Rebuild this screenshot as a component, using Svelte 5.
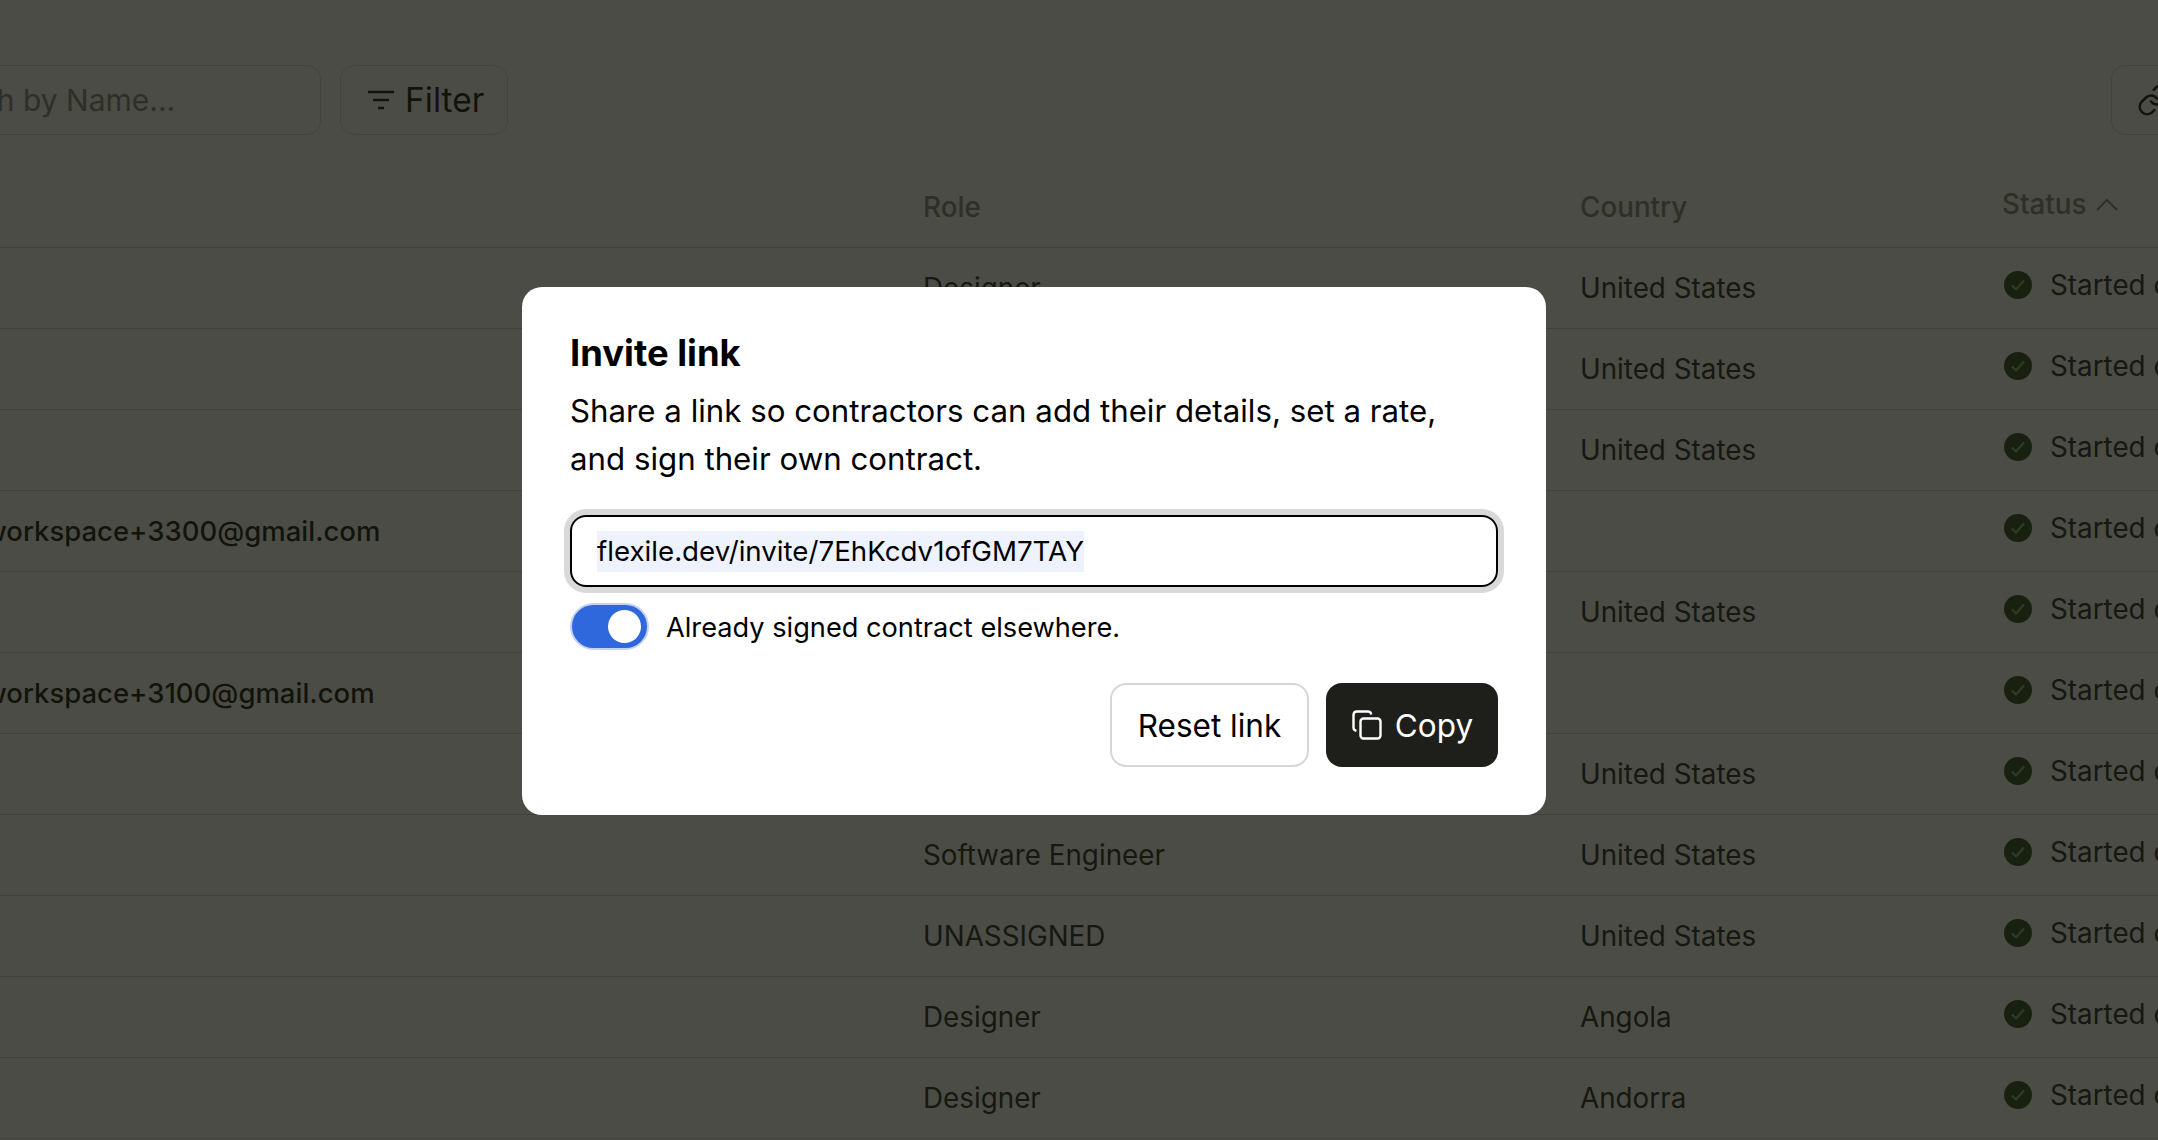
<script>
  const rows = [
    { name: '', role: 'Designer', country: 'United States' },
    { name: '', role: 'Software Engineer', country: 'United States' },
    { name: '', role: 'Designer', country: 'United States' },
    { name: 'workspace+3300@gmail.com', role: '', country: '' },
    { name: '', role: 'Designer', country: 'United States' },
    { name: 'workspace+3100@gmail.com', role: '', country: '' },
    { name: '', role: 'Designer', country: 'United States' },
    { name: '', role: 'Software Engineer', country: 'United States' },
    { name: '', role: 'UNASSIGNED', country: 'United States' },
    { name: '', role: 'Designer', country: 'Angola' },
    { name: '', role: 'Designer', country: 'Andorra' }
  ];
</script>

<main class="page">
  <div class="toolbar">
    <div class="search">Search by Name...</div>
    <button type="button" class="filter">
      <svg width="30" height="24" viewBox="0 0 30 24" fill="none" stroke="currentColor" stroke-width="2.6">
        <path d="M2 4h26M7 12h16M12 20h6" />
      </svg>
      Filter
    </button>
    <button type="button" class="link-btn" aria-label="Invite link">
      <svg width="36" height="36" viewBox="0 0 24 24" fill="none" stroke="currentColor" stroke-width="1.7" stroke-linecap="round">
        <path d="M10 13a5 5 0 0 0 7.5.5l3-3a5 5 0 0 0-7-7l-1.7 1.7" />
        <path d="M14 11a5 5 0 0 0-7.500-.5l-3 3a5 5 0 0 0 7 7l1.700-1.700" />
      </svg>
    </button>
  </div>

  <div class="table">
    <div class="row head">
      <div class="name"></div>
      <div class="role">Role</div>
      <div class="country">Country</div>
      <div class="status">Status
        <svg width="24" height="16" viewBox="0 0 24 16" fill="none" stroke="currentColor" stroke-width="2"><path d="M2 14 12 4l10 10" /></svg>
      </div>
    </div>
    {#each rows as row}
      <div class="row">
        <div class="name">{row.name}</div>
        <div class="role">{row.role}</div>
        <div class="country">{row.country}</div>
        <div class="status">
          <svg class="check" width="28" height="28" viewBox="0 0 28 28">
            <circle cx="14" cy="14" r="14" fill="#37552f" />
            <path d="M8 14.500l4 4 8-9" fill="none" stroke="#9db294" stroke-width="2.200" />
          </svg>
          <span>Started contract</span>
        </div>
      </div>
    {/each}
  </div>
</main>

<div class="overlay">
  <div class="dialog" role="dialog" aria-labelledby="invite-title">
    <h2 id="invite-title">Invite link</h2>
    <p>Share a link so contractors can add their details, set a rate,<br />and sign their own contract.</p>
    <div class="field"><span class="selected">flexile.dev/invite/7EhKcdv1ofGM7TAY</span></div>
    <div class="switch-row">
      <span class="switch"><span class="knob"></span></span>
      <span class="switch-label">Already signed contract elsewhere.</span>
    </div>
    <div class="actions">
      <button type="button" class="reset">Reset link</button>
      <button type="button" class="copy">
        <svg width="32" height="32" viewBox="0 0 32 32" fill="none" stroke="currentColor" stroke-width="2.400" stroke-linejoin="round" stroke-linecap="round">
          <rect x="9.500" y="9.500" width="20" height="20" rx="3" />
          <path d="M4.500 21.500C3 21 2.500 20 2.500 18.500V6c0-2 1.500-3.500 3.500-3.500h11c1.500 0 2.500.5 3 2" />
        </svg>
        Copy
      </button>
    </div>
  </div>
</div>

<style>
  :global(body) {
    margin: 0;
    overflow: hidden;
    background: #fff;
    font-family: Inter, "Liberation Sans", sans-serif;
  }

  .page {
    width: 2500px;
    height: 1140px;
    margin-left: -120px;
    overflow: hidden;
    color: #6f7068;
    font-size: 27.8px;
  }

  .toolbar {
    display: flex;
    align-items: center;
    gap: 20px;
    height: 70px;
    padding-top: 65px;
  }

  .search {
    box-sizing: border-box;
    width: 441px;
    height: 70px;
    padding-left: 34px;
    display: flex;
    align-items: center;
    border: 1px solid #dcdcd8;
    border-radius: 14px;
    color: #8c8d85;
    font-size: 30px;
  }

  .filter,
  .link-btn {
    box-sizing: border-box;
    height: 70px;
    display: flex;
    align-items: center;
    background: none;
    border: 1px solid #dcdcd8;
    border-radius: 14px;
    color: #1f1f1b;
    font: inherit;
    font-size: 33.500px;
  }

  .filter {
    width: 168px;
    gap: 9px;
    margin-left: -1px;
    padding: 0 0 0 25px;
  }

  .link-btn {
    margin-left: 1583px;
    width: 90px;
    padding: 0 0 0 24px;
  }

  .table {
    margin-top: 32px;
  }

  .row {
    display: flex;
    align-items: center;
    height: 80px;
    border-bottom: 1px solid #d2d2ce;
    color: #30312b;
  }

  .head {
    height: 80px;
    color: #8c8d85;
    font-weight: 500;
  }

  .name {
    box-sizing: border-box;
    width: 1043px;
    padding-left: 104px;
    font-size: 27.500px;
    font-weight: 500;
    color: #1f1f1b;
  }

  .role {
    width: 657px;
  }

  .country {
    width: 422px;
  }

  .status {
    display: flex;
    align-items: center;
    gap: 18px;
    white-space: nowrap;
    padding-bottom: 6px;
  }

  .check {
    margin-left: 2px;
  }

  .head .status {
    gap: 8px;
  }

  .overlay {
    position: fixed;
    inset: 0;
    background: rgba(15, 16, 7, 0.75);
  }

  .dialog {
    position: absolute;
    left: 522px;
    top: 287px;
    box-sizing: border-box;
    width: 1024px;
    height: 528px;
    padding: 44px 48px 48px;
    background: #fff;
    border-radius: 20px;
    color: #000;
  }

  h2 {
    margin: 0;
    font-size: 36.400px;
    line-height: 44px;
    font-weight: 700;
  }

  p {
    margin: 13px 0 0;
    font-size: 31.250px;
    line-height: 47.500px;
  }

  .field {
    box-sizing: border-box;
    height: 72px;
    margin-top: 32px;
    padding-left: 25px;
    display: flex;
    align-items: center;
    border: 2px solid #000;
    border-radius: 16px;
    box-shadow: 0 0 0 6px #d9d9d9;
    font-size: 27.700px;
  }

  .selected {
    background: #edf2fc;
    line-height: 41px;
  }

  .switch-row {
    display: flex;
    align-items: center;
    gap: 17px;
    margin-top: 16px;
    font-size: 27.200px;
  }

  .switch-label {
    padding-top: 2px;
  }

  .switch {
    box-sizing: border-box;
    width: 79px;
    height: 47px;
    padding: 5px 6px;
    display: flex;
    justify-content: flex-end;
    background: #2f68dc;
    border: 2px solid #c5d3ee;
    border-radius: 24px;
  }

  .knob {
    width: 33px;
    height: 33px;
    border-radius: 50%;
    background: #fff;
  }

  .actions {
    display: flex;
    justify-content: flex-end;
    gap: 17px;
    margin-top: 33px;
  }

  .actions button {
    box-sizing: border-box;
    height: 84px;
    border-radius: 16px;
    font: inherit;
    font-size: 31.500px;
    display: flex;
    align-items: center;
    justify-content: center;
  }

  .reset {
    width: 199px;
    background: #fff;
    border: 2px solid #d6d6d6;
    color: #000;
  }

  .copy {
    width: 172px;
    gap: 12px;
    background: #1e1e1a;
    border: none;
    color: #fff;
  }
</style>
